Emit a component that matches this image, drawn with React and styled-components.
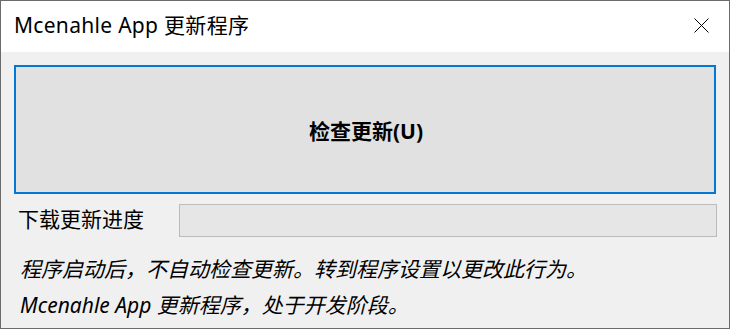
import styled, { createGlobalStyle } from "styled-components";

const GlobalStyle = createGlobalStyle`
  html, body {
    margin: 0;
    padding: 0;
    background: #f0f0f0;
  }
  * {
    box-sizing: border-box;
  }
`;

const FONT = `"Noto Sans", "Noto Sans CJK SC", sans-serif`;

const Window = styled.div`
  width: 730px;
  height: 329px;
  border: 1px solid #6b6b6b;
  display: flex;
  flex-direction: column;
  font-family: ${FONT};
  color: #000;
  background: #f0f0f0;
  overflow: hidden;
`;

const TitleBar = styled.div`
  height: 51px;
  flex-shrink: 0;
  background: #fff;
  display: flex;
  align-items: center;
  justify-content: space-between;
  padding: 0 20px 0 13px;
`;

const Title = styled.div`
  font-size: 21px;
  line-height: 1;
  letter-spacing: 0.3px;
  margin-top: -2px;
`;

const CloseButton = styled.div`
  width: 15px;
  height: 15px;
  display: flex;
  margin-top: -2px;
`;

const Content = styled.div`
  flex: 1;
  display: flex;
  flex-direction: column;
  padding: 13px 13px 0 13px;
`;

const CheckButton = styled.button`
  height: 129px;
  width: 100%;
  border: 2px solid #0078d7;
  background: #e1e1e1;
  font-family: ${FONT};
  font-size: 21px;
  font-weight: 700;
  color: #000;
  display: flex;
  align-items: center;
  justify-content: center;
  padding: 0 0 0 2px;
  cursor: pointer;
`;

const ProgressRow = styled.div`
  display: flex;
  align-items: center;
  margin-top: 10px;
  height: 33px;
`;

const Label = styled.div`
  width: 165px;
  padding-left: 4px;
  font-size: 21px;
  line-height: 1;
  margin-top: -2px;
`;

const ProgressTrack = styled.div`
  flex: 1;
  height: 33px;
  margin-right: -1px;
  border: 1px solid #bcbcbc;
  background: #e6e6e6;
`;

const Notes = styled.div`
  margin-top: 14px;
  padding-left: 6px;
`;

const Note = styled.div`
  font-size: 21px;
  font-style: italic;
  line-height: 36px;
  white-space: nowrap;
`;

export default function App() {
  return (
    <>
      <GlobalStyle />
      <Window>
        <TitleBar>
          <Title>Mcenahle App 更新程序</Title>
          <CloseButton>
            <svg width="15" height="15" viewBox="0 0 15 15">
              <path d="M0.5 0.5 L14.5 14.5 M14.5 0.5 L0.5 14.5" stroke="#000" strokeWidth="1" fill="none" />
            </svg>
          </CloseButton>
        </TitleBar>
        <Content>
          <CheckButton>检查更新(U)</CheckButton>
          <ProgressRow>
            <Label>下载更新进度</Label>
            <ProgressTrack />
          </ProgressRow>
          <Notes>
            <Note>程序启动后，不自动检查更新。转到程序设置以更改此行为。</Note>
            <Note>Mcenahle App 更新程序，处于开发阶段。</Note>
          </Notes>
        </Content>
      </Window>
    </>
  );
}
